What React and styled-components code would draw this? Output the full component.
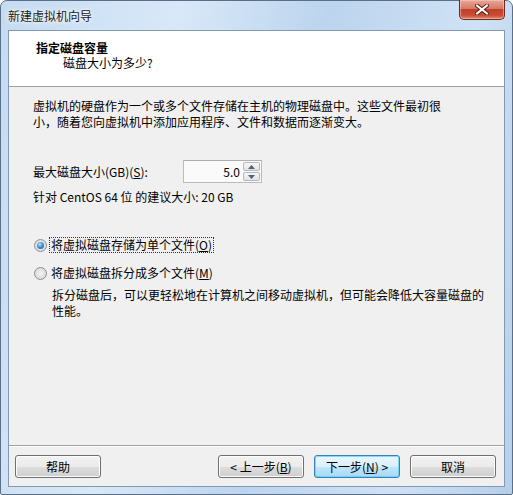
import React from "react";
import styled, { createGlobalStyle } from "styled-components";

const Global = createGlobalStyle`
  html, body { margin: 0; padding: 0; background: #ffffff; }
  body { font-family: "Noto Sans CJK SC", "Noto Sans", sans-serif; font-size: 12px; color: #000; }
`;

const Window = styled.div`
  box-sizing: border-box;
  width: 513px;
  height: 495px;
  display: flex;
  flex-direction: column;
  border: 1px solid #5b6f86;
  border-radius: 7px 7px 2px 2px;
  background: linear-gradient(100deg, #c5dbf2 0%, #d9e8f8 30%, #bcd4ee 55%, #cfe1f5 80%, #b6cfe9 100%);
  padding: 0 7px 7px 7px;
  position: relative;
`;

const TitleBar = styled.div`
  height: 29px;
  display: flex;
  align-items: center;
  padding-left: 0;
  font-size: 12px;
  color: #1a1a1a;
  text-shadow: 0 0 6px #ffffff, 0 0 3px #ffffff;
`;

const CloseBtn = styled.div`
  position: absolute;
  top: -1px;
  right: 7px;
  width: 44px;
  height: 19px;
  border: 1px solid #6b2a1e;
  border-top: none;
  border-radius: 0 0 5px 5px;
  background: linear-gradient(#e9a898 0%, #d67a66 45%, #c2402a 50%, #c94b33 80%, #e08b6f 100%);
  display: flex;
  align-items: center;
  justify-content: center;
  box-shadow: inset 0 0 0 1px rgba(255, 210, 200, 0.5);
`;

const Client = styled.div`
  flex: 1;
  display: flex;
  flex-direction: column;
  background: #f0f0f0;
  border: 1px solid #8399b1;
`;

const Header = styled.div`
  height: 56px;
  background: #ffffff;
  border-bottom: 1px solid #a0a0a0;
  padding: 9px 0 0 27px;
  box-sizing: border-box;
  display: flex;
  flex-direction: column;
`;

const HeaderTitle = styled.div`
  font-weight: bold;
  line-height: 15px;
`;

const HeaderSub = styled.div`
  margin-left: 27px;
  margin-top: 0;
  line-height: 15px;
`;

const Body = styled.div`
  flex: 1;
  padding: 11px 0 0 24px;
  display: flex;
  flex-direction: column;
`;

const Para = styled.p`
  margin: ${(p) => p.$mt || 0}px 0 0 ${(p) => p.$ml || 0}px;
  max-width: ${(p) => p.$w}px;
  line-height: 16px;
`;

const SizeRow = styled.div`
  display: flex;
  align-items: center;
  margin-top: 30px;
  height: 23px;
`;

const Label = styled.span`
  width: 150px;
`;

const Spin = styled.div`
  display: flex;
  width: 79px;
  height: 23px;
  box-sizing: border-box;
  border: 1px solid #b9bcc2;
  border-top-color: #abadb3;
  background: #fafafa;
`;

const SpinValue = styled.div`
  flex: 1;
  text-align: right;
  padding-right: 3px;
  line-height: 21px;
`;

const SpinButtons = styled.div`
  width: 17px;
  display: flex;
  flex-direction: column;
  gap: 1px;
  padding: 1px 1px 1px 0;
`;

const SpinArrow = styled.div`
  flex: 1;
  border: 1px solid #b5b8be;
  border-radius: 2px;
  background: linear-gradient(#f6f6f6, #e3e3e3);
  display: flex;
  align-items: center;
  justify-content: center;
`;

const Note = styled.div`
  margin-top: 6px;
  line-height: 15px;
`;

const RadioRow = styled.label`
  display: flex;
  align-items: center;
  gap: 2px;
  margin-top: ${(p) => p.$mt}px;
  height: 16px;
`;

const RadioDot = styled.span`
  width: 13px;
  height: 13px;
  box-sizing: border-box;
  border-radius: 50%;
  border: 1px solid #8e8f8f;
  background: radial-gradient(circle at 50% 50%, #f4f4f4 0%, #dcdcdc 70%, #f8f8f8 100%);
  display: flex;
  align-items: center;
  justify-content: center;
  margin-left: 1px;
  &::after {
    content: "";
    display: ${(p) => (p.$on ? "block" : "none")};
    width: 7px;
    height: 7px;
    border-radius: 50%;
    background: radial-gradient(circle at 40% 35%, #bfe6ff 0%, #3d94d8 45%, #135c9c 100%);
  }
`;

const RadioText = styled.span`
  padding: 0 1px;
  line-height: 14px;
  border: 1px dotted ${(p) => (p.$focus ? "#333" : "transparent")};
`;

const U = styled.span`
  text-decoration: underline;
`;

const Footer = styled.div`
  height: 41px;
  border-top: 1px solid #a0a0a0;
  box-shadow: inset 0 1px 0 #ffffff;
  display: flex;
  align-items: flex-start;
  padding: 9px 8px 0 6px;
  box-sizing: border-box;
`;

const Spacer = styled.div`
  flex: 1;
`;

const Button = styled.button`
  width: 86px;
  height: 23px;
  margin-left: ${(p) => p.$ml || 0}px;
  font-family: inherit;
  font-size: 12px;
  color: #000;
  border-radius: 3px;
  border: 1px solid ${(p) => (p.$def ? "#3c7fb1" : "#707070")};
  background: ${(p) =>
    p.$def
      ? "linear-gradient(#eaf6fd 0%, #d9f0fc 50%, #bee6fd 51%, #a7d9f5 100%)"
      : "linear-gradient(#f2f2f2 0%, #ebebeb 50%, #dddddd 51%, #cfcfcf 100%)"};
  box-shadow: inset 0 0 0 1px ${(p) => (p.$def ? "#48d0f7aa" : "#fcfcfc")};
  padding: 0;
  line-height: 21px;
`;

export default function App() {
  return (
    <>
      <Global />
      <Window>
        <TitleBar>新建虚拟机向导</TitleBar>
        <CloseBtn>
          <svg width="14" height="11" viewBox="0 0 14 11">
            <path d="M2 1.5 L12 9.5 M12 1.5 L2 9.5" stroke="#5a1f14" strokeWidth="4" strokeLinecap="square" />
            <path d="M2 1.5 L12 9.5 M12 1.5 L2 9.5" stroke="#ffffff" strokeWidth="2" strokeLinecap="square" />
          </svg>
        </CloseBtn>
        <Client>
          <Header>
            <HeaderTitle>指定磁盘容量</HeaderTitle>
            <HeaderSub>磁盘大小为多少?</HeaderSub>
          </Header>
          <Body>
            <Para $w={414}>
              虚拟机的硬盘作为一个或多个文件存储在主机的物理磁盘中。这些文件最初很小，随着您向虚拟机中添加应用程序、文件和数据而逐渐变大。
            </Para>
            <SizeRow>
              <Label>
                最大磁盘大小(GB)(<U>S</U>):
              </Label>
              <Spin>
                <SpinValue>5.0</SpinValue>
                <SpinButtons>
                  <SpinArrow>
                    <svg width="7" height="4" viewBox="0 0 7 4">
                      <path d="M0 4 L3.5 0 L7 4 Z" fill="#4a5f8a" />
                    </svg>
                  </SpinArrow>
                  <SpinArrow>
                    <svg width="7" height="4" viewBox="0 0 7 4">
                      <path d="M0 0 L3.5 4 L7 0 Z" fill="#4a5f8a" />
                    </svg>
                  </SpinArrow>
                </SpinButtons>
              </Spin>
            </SizeRow>
            <Note>针对 CentOS 64 位 的建议大小: 20 GB</Note>
            <RadioRow $mt={33}>
              <RadioDot $on />
              <RadioText $focus>
                将虚拟磁盘存储为单个文件(<U>O</U>)
              </RadioText>
            </RadioRow>
            <RadioRow $mt={12}>
              <RadioDot />
              <RadioText>
                将虚拟磁盘拆分成多个文件(<U>M</U>)
              </RadioText>
            </RadioRow>
            <Para $w={432} $ml={19} $mt={6}>
              拆分磁盘后，可以更轻松地在计算机之间移动虚拟机，但可能会降低大容量磁盘的性能。
            </Para>
          </Body>
          <Footer>
            <Button>帮助</Button>
            <Spacer />
            <Button>
              &lt; 上一步(<U>B</U>)
            </Button>
            <Button $def $ml={10}>
              下一步(<U>N</U>) &gt;
            </Button>
            <Button $ml={10}>取消</Button>
          </Footer>
        </Client>
      </Window>
    </>
  );
}
